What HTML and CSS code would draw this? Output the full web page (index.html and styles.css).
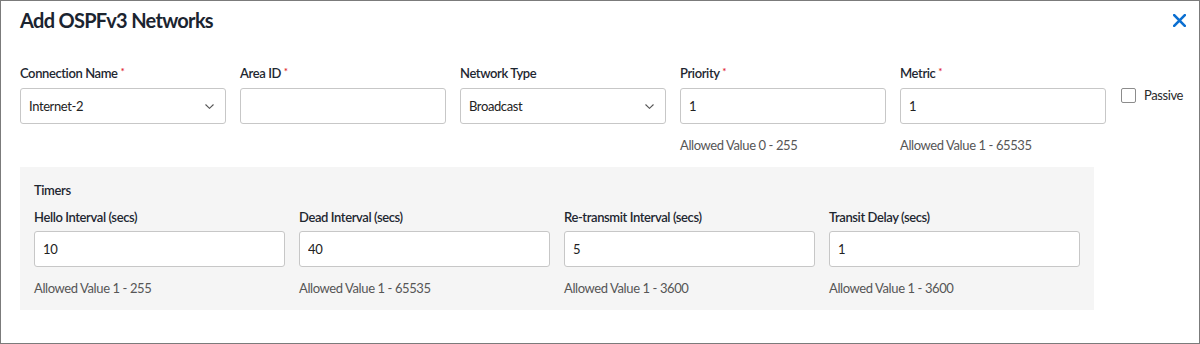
FILE: index.html
```html
<html>
<head>
<meta http-equiv="Content-Type" content="text/html; charset=utf-8">
<title>Add OSPFv3 Networks</title>
<link rel="stylesheet" href="styles.css">
</head>
<body>
<div class="dialog">
<div class="dialogHead">
<h2>Add OSPFv3 Networks</h2>
<button class="closeBtn" type="button" aria-label="Close">
<svg width="13" height="13" viewBox="0 0 13 13"><path d="M1.2 1.2 L11.8 11.8 M11.8 1.2 L1.2 11.8" stroke="#0b6fd1" stroke-width="2.6" stroke-linecap="square" fill="none"/></svg>
</button>
</div>

<div class="mainRow">
<div class="field">
<label>Connection Name <span class="req">*</span></label>
<div class="selectBox"><span>Internet-2</span>
<svg class="chev" width="9" height="5" viewBox="0 0 9 5"><path d="M0.5 0.5 L4.5 4.3 L8.5 0.5" stroke="#555" stroke-width="1.1" fill="none"/></svg>
</div>
</div>
<div class="field">
<label>Area ID <span class="req">*</span></label>
<input class="textBox" type="text" value="">
</div>
<div class="field">
<label>Network Type</label>
<div class="selectBox"><span>Broadcast</span>
<svg class="chev" width="9" height="5" viewBox="0 0 9 5"><path d="M0.5 0.5 L4.5 4.3 L8.5 0.5" stroke="#555" stroke-width="1.1" fill="none"/></svg>
</div>
</div>
<div class="field">
<label>Priority <span class="req">*</span></label>
<input class="textBox" type="text" value="1">
<div class="hint">Allowed Value 0 - 255</div>
</div>
<div class="field">
<label>Metric <span class="req">*</span></label>
<input class="textBox" type="text" value="1">
<div class="hint">Allowed Value 1 - 65535</div>
</div>
<label class="passive"><span class="check"></span>Passive</label>
</div>

<div class="timers">
<div class="timersTitle">Timers</div>
<div class="timerRow">
<div class="field wide">
<label>Hello Interval (secs)</label>
<input class="textBox" type="text" value="10">
<div class="hint">Allowed Value 1 - 255</div>
</div>
<div class="field wide">
<label>Dead Interval (secs)</label>
<input class="textBox" type="text" value="40">
<div class="hint">Allowed Value 1 - 65535</div>
</div>
<div class="field wide">
<label>Re-transmit Interval (secs)</label>
<input class="textBox" type="text" value="5">
<div class="hint">Allowed Value 1 - 3600</div>
</div>
<div class="field wide">
<label>Transit Delay (secs)</label>
<input class="textBox" type="text" value="1">
<div class="hint">Allowed Value 1 - 3600</div>
</div>
</div>
</div>
</div>
</body>
</html>
```

FILE: styles.css
```css
*{
box-sizing:border-box;
}
html,body{
margin:0;
padding:0;
background:#fff;
}
body{
font-family:Lato,"Liberation Sans",sans-serif;
color:#1e2731;
letter-spacing:-0.4px;
}
.dialog{
width:1200px;
height:344px;
border:1px solid #7b7b7b;
padding:7px 13px 0 19px;
}
.dialogHead{
display:flex;
align-items:center;
justify-content:space-between;
}
.dialogHead h2{
margin:0;
font-size:20px;
line-height:24px;
font-weight:700;
letter-spacing:-0.7px;
color:#1b2430;
}
.closeBtn{
border:0;
background:none;
padding:0;
width:13px;
height:13px;
display:flex;
cursor:pointer;
}
.mainRow{
display:flex;
align-items:flex-start;
gap:14px;
margin-top:33px;
}
.field{
width:206px;
display:flex;
flex-direction:column;
}
.field label{
font-size:13px;
line-height:16px;
font-weight:600;
color:#1e2731;
margin-bottom:7px;
}
.req{
color:#e0262f;
font-size:10px;
vertical-align:top;
line-height:12px;
}
.textBox,.selectBox{
height:36px;
width:100%;
border:1px solid #c7c7c7;
border-radius:3px;
background:#fff;
font-family:Lato,"Liberation Sans",sans-serif;
font-size:13px;
letter-spacing:-0.4px;
color:#222;
padding:0 8px;
outline:none;
}
.selectBox{
display:flex;
align-items:center;
justify-content:space-between;
padding-right:11px;
}
.chev{
display:block;
}
.hint{
margin-top:13px;
font-size:13px;
line-height:16px;
color:#565656;
}
.passive{
display:flex;
align-items:center;
gap:8px;
margin-left:1px;
margin-top:22px;
font-size:13px;
line-height:16px;
color:#2a2a2a;
}
.check{
width:15px;
height:15px;
border:1px solid #8c8c8c;
border-radius:2px;
background:#fff;
}
.timers{
width:1074px;
margin-top:14px;
background:#f5f5f5;
padding:15px 14px 14px 14px;
}
.timersTitle{
font-size:13px;
line-height:16px;
font-weight:600;
margin-bottom:11px;
}
.timerRow{
display:flex;
gap:14px;
}
.field.wide{
width:251px;
}
.timerRow .field label{
margin-bottom:6px;
}
```
